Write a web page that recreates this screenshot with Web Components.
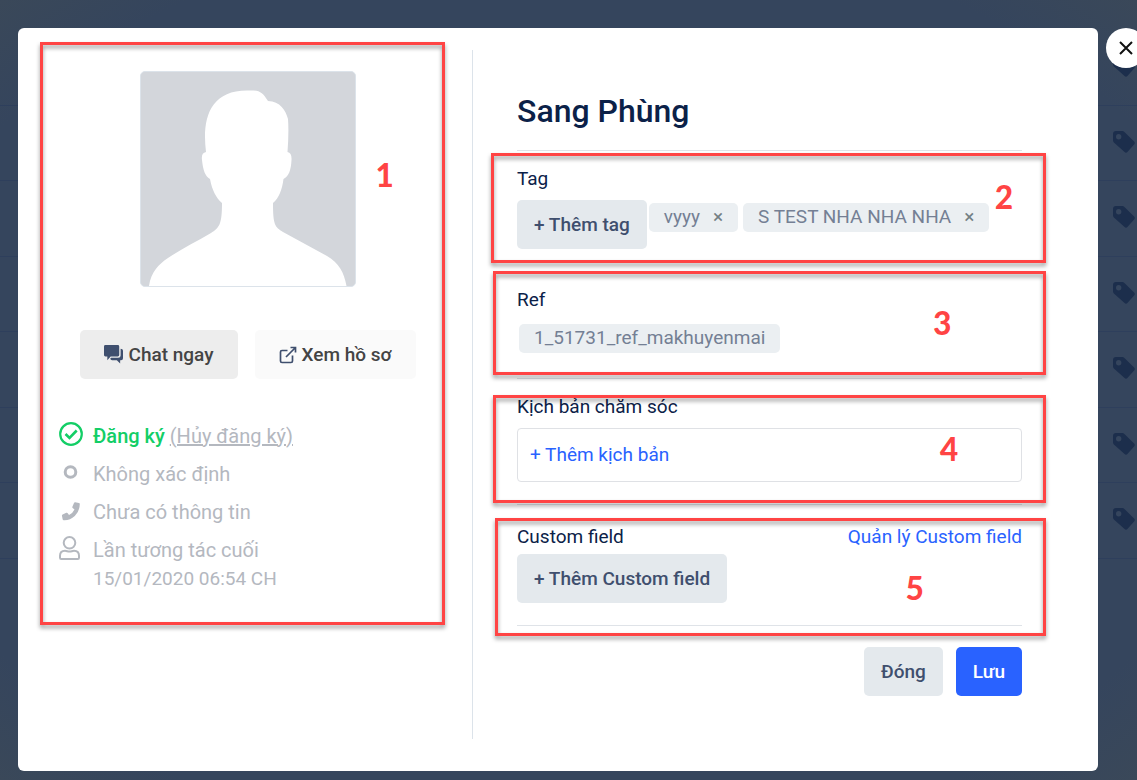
<!DOCTYPE html>
<html lang="vi">
<head>
<meta charset="utf-8">
<meta name="viewport" content="width=device-width, initial-scale=1">
<title>Sang Phùng</title>
<style>
    body {
        margin: 0;
        min-height: 100vh;
        background-color: #35455d;
        color: #0b2148;
        font-family: Roboto, "Noto Sans", sans-serif;
        font-size: 19px;
        line-height: 30px;
    }
</style>
</head>
<body>
<app-page></app-page>

<script>
// icon shapes, each on its own view box
const ICONS = {
    tag: ['0 0 22 22', '<path fill="currentColor" fill-rule="evenodd" d="M3 0h6.200q1.300 0 2.200.900l9.700 9.700q1.400 1.400 0 2.800l-6.700 7.700q-1.400 1.400-2.800 0L.900 11.400Q0 10.500 0 9.200V3Q0 0 3 0ZM5.700 3a2.700 2.700 0 1 0 0 5.400a2.700 2.700 0 0 0 0-5.400Z"/>'],
    close: ['0 0 14 14', '<path d="M1 1L13 13M13 1L1 13" fill="none" stroke="currentColor" stroke-width="2"/>'],
    chat: ['0 0 20 20', '<path fill="currentColor" d="M1.500 0h13Q16 0 16 1.500v9Q16 12 14.500 12H7l-3.500 4v-4H1.500Q0 12 0 10.500v-9Q0 0 1.500 0ZM17.500 4Q20 4 20 6v8Q20 16 18 16H17v3.500L13.500 16H8.500Q7 16 6.500 14.500l1-1H15Q17.500 13.500 17.500 11Z"/>'],
    open: ['0 0 18 18', '<g fill="none" stroke="currentColor" stroke-width="1.700"><path d="M8.500 4.500H3Q1.500 4.500 1.500 6v9Q1.500 16.500 3 16.500h9Q13.500 16.500 13.500 15V9.500"/><path d="M7 11L16 2M11.500 1.500h5V6.500"/></g>'],
    check: ['0 0 24 24', '<circle cx="12" cy="12" r="10.800" fill="none" stroke="currentColor" stroke-width="2.200"/><path d="M6.500 12l4 4L17.700 8.500" fill="none" stroke="currentColor" stroke-width="2.600"/>'],
    ring: ['0 0 24 24', '<circle cx="11.500" cy="12" r="5.300" fill="none" stroke="currentColor" stroke-width="3"/>'],
    phone: ['0 0 24 24', '<path fill="currentColor" transform="translate(-1 2)" d="M20.900 3.100l-3.700-.800q-.900-.100-1.200.700l-1.600 3.700q-.300.700.300 1.200l1.800 1.500q-1.700 3.700-5.500 5.500l-1.500-1.800q-.500-.600-1.200-.300l-3.700 1.600q-.800.400-.700 1.200l.800 3.900q.200.700 1 .700Q12 20.500 16.800 16Q21.600 11.500 21.800 4.100q0-.800-.9-1Z"/>'],
    user: ['0 0 24 24', '<g fill="none" stroke="currentColor" stroke-width="2"><circle cx="10.500" cy="6.800" r="5.800"/><path d="M1 21.800v-2q0-5 5-5c2 0 2.500.800 4.500.800s2.500-.8 4.500-.8q5 0 5 5v2q0 1.200-1.200 1.200H2.200Q1 23 1 21.800Z"/></g>'],
};

function define(name, render) {
    customElements.define(name, class extends HTMLElement {
        constructor() {
            super();
            this.attachShadow({ mode: 'open' });
        }
        connectedCallback() {
            this.shadowRoot.innerHTML = render(this);
        }
    });
}

define('ui-icon', (el) => {
    const [box, shape] = ICONS[el.getAttribute('name')];
    return `
        <style>
            :host { display: inline-block; flex: none; width: 24px; height: 24px; }
            svg { display: block; width: 100%; height: 100%; }
        </style>
        <svg viewBox="${box}" aria-hidden="true">${shape}</svg>`;
});

define('ui-button', (el) => `
    <style>
        :host { display: inline-block; }
        button {
            display: flex;
            align-items: center;
            justify-content: center;
            gap: 5px;
            width: 100%;
            height: 49px;
            padding: 0 17px;
            border: 0;
            border-radius: 5px;
            background-color: #e4e9ed;
            color: #3f4f6e;
            font: inherit;
            font-weight: 500;
            white-space: nowrap;
            cursor: pointer;
        }
        :host([kind="primary"]) button { background-color: #2962ff; color: white; }
        :host([kind="grey"]) button { padding: 0 24px; background-color: #ededed; color: #444; }
        :host([kind="light"]) button { padding: 0 24px; background-color: #fafafa; color: #444; }
        ::slotted(ui-icon) { color: #3f4f6e; }
        :host([kind="grey"]) ::slotted(ui-icon) { width: 19px; height: 19px; }
        :host([kind="light"]) ::slotted(ui-icon) { width: 18px; height: 18px; }
    </style>
    <button type="button"><slot></slot></button>`);

define('tag-badge', (el) => `
    <style>
        :host {
            display: inline-flex;
            align-items: center;
            gap: 13px;
            box-sizing: border-box;
            height: 29px;
            margin: 3px 3px 3px 2px;
            padding: 0 15px 2px;
            border-radius: 5px;
            background-color: #ebeff2;
            color: #747f94;
            line-height: 28px;
        }
        button {
            padding: 0;
            border: 0;
            background: none;
            color: #747f84;
            font: inherit;
            cursor: pointer;
        }
    </style>
    <slot></slot>${el.hasAttribute('removable') ? '<button type="button" aria-label="Xóa">×</button>' : ''}`);

// red marker frame laid over the block that holds it
define('note-box', (el) => `
    <style>
        :host {
            position: absolute;
            z-index: 1;
            border: 3px solid #ff4444;
            filter: drop-shadow(0 3px 2px rgba(0, 0, 0, .4));
            pointer-events: none;
        }
    </style>`);

define('note-number', (el) => `
    <style>
        :host {
            position: absolute;
            z-index: 2;
            color: #ff4444;
            font: bold 36px/32px Carlito, Lato, sans-serif;
            pointer-events: none;
        }
    </style>
    <slot></slot>`);

define('field-section', (el) => `
    <style>
        :host {
            display: block;
            position: relative;
            padding: 13px 0 22px;
            border-bottom: 1px solid #dfe3e8;
        }
        :host([compact]) { padding-top: 17px; }
        header {
            display: flex;
            justify-content: space-between;
            margin-bottom: 6px;
        }
        :host([compact]) header { margin-bottom: 2px; }
        h2 { margin: 0; font: inherit; }
        div { display: flex; flex-wrap: wrap; align-items: flex-start; }
    </style>
    <header><h2>${el.getAttribute('label')}</h2><slot name="action"></slot></header>
    <div><slot></slot></div>
    <slot name="note"></slot>`);

define('info-row', (el) => `
    <style>
        :host {
            display: flex;
            align-items: center;
            gap: 10px;
            min-height: 38px;
            padding-left: 19px;
            color: #b4b8bf;
            font-size: 20px;
            line-height: 29px;
        }
        ui-icon { margin-bottom: 4px; }
        :host([icon="check"]) ui-icon { color: #13ce66; }
    </style>
    <ui-icon name="${el.getAttribute('icon')}"></ui-icon>
    <span><slot></slot></span>`);

define('profile-avatar', () => `
    <style>
        :host { display: block; }
        svg {
            display: block;
            box-sizing: border-box;
            width: 216px;
            height: 216px;
            border: 1px solid #dce3ea;
            border-radius: 5px;
            background-color: #d3d6db;
        }
    </style>
    <svg viewBox="0 0 214 214" role="img" aria-label="Ảnh đại diện">
        <path fill="white" d="M8 214C10 200 18 192 27 186C40 177 55 170 70 161C78 156 81 153 81 131C75 126 71 118 69 107C64 104 62 98 61 88Q60 81 65 80C61 48 68 18 107 18.500C119 18 121 20 127 29C139 29 145 39 147 47Q148 60 146.500 80Q151 81 150.500 88C150 98 148 104 142.500 107C141 118 138 126 132 131C132 153 134 155 142 160L186 184C198 191 203 200 205.500 214Z"/>
    </svg>`);

define('profile-panel', () => `
    <style>
        :host {
            display: block;
            position: relative;
            padding: 21px 16px 0 22px;
            border-right: 1px solid #dce3ea;
        }
        profile-avatar { display: flex; justify-content: center; }
        .actions { display: flex; justify-content: center; gap: 17px; margin: 43px 0 38px; }
        .on { color: #13ce66; font-weight: 500; }
        a { color: inherit; }
        .date { padding-left: 53px; color: #b4b8bf; line-height: 20px; }
        note-box { inset: -8px 27px auto 22px; height: 577px; }
        note-number { top: 109px; left: 357px; }
    </style>
    <profile-avatar></profile-avatar>
    <div class="actions">
        <ui-button kind="grey"><ui-icon name="chat"></ui-icon>Chat ngay</ui-button>
        <ui-button kind="light"><ui-icon name="open"></ui-icon>Xem hồ sơ</ui-button>
    </div>
    <info-row icon="check"><span class="on">Đăng ký</span> <a href="#">(Hủy đăng ký)</a></info-row>
    <info-row icon="ring">Không xác định</info-row>
    <info-row icon="phone">Chưa có thông tin</info-row>
    <info-row icon="user">Lần tương tác cuối</info-row>
    <div class="date">15/01/2020 06:54 CH</div>
    <note-box></note-box>
    <note-number>1</note-number>`);

define('detail-panel', () => `
    <style>
        :host { display: block; padding: 41px 76px 43px 44px; }
        h1 {
            margin: 0;
            padding-bottom: 19px;
            border-bottom: 1px solid #dfe3e8;
            font-size: 32px;
            font-weight: 500;
            line-height: 40px;
        }
        a { color: #2962ff; text-decoration: none; }
        .script {
            flex: 1;
            box-sizing: border-box;
            height: 54px;
            padding: 0 12px;
            border: 1px solid #dfe1e5;
            border-radius: 4px;
            line-height: 52px;
        }
        footer { display: flex; justify-content: flex-end; gap: 13px; margin-top: 21px; }
        note-box { right: -24px; }
    </style>
    <h1>Sang Phùng</h1>
    <field-section label="Tag">
        <ui-button>+ Thêm tag</ui-button>
        <tag-badge removable>vyyy</tag-badge>
        <tag-badge removable>S TEST NHA NHA NHA</tag-badge>
        <note-box slot="note" style="left: -26px; top: 2px; bottom: 8px"></note-box>
        <note-number slot="note" style="right: 9px; top: 30px">2</note-number>
    </field-section>
    <field-section label="Ref">
        <tag-badge>1_51731_ref_makhuyenmai</tag-badge>
        <note-box slot="note" style="left: -24px; top: -1px; bottom: 3px"></note-box>
        <note-number slot="note" style="right: 71px; top: 35px">3</note-number>
    </field-section>
    <field-section label="Kịch bản chăm sóc">
        <div class="script"><a href="#">+ Thêm kịch bản</a></div>
        <note-box slot="note" style="left: -24px; top: 16px; bottom: 1px"></note-box>
        <note-number slot="note" style="right: 64px; top: 54px">4</note-number>
    </field-section>
    <field-section label="Custom field" compact>
        <a slot="action" href="#">Quản lý Custom field</a>
        <ui-button>+ Thêm Custom field</ui-button>
        <note-box slot="note" style="left: -22px; top: 13px; bottom: -11px"></note-box>
        <note-number slot="note" style="right: 98px; top: 67px">5</note-number>
    </field-section>
    <footer>
        <ui-button>Đóng</ui-button>
        <ui-button kind="primary">Lưu</ui-button>
    </footer>`);

define('profile-dialog', () => `
    <style>
        :host {
            display: grid;
            grid-template-columns: 455px 1fr;
            position: relative;
            margin: 28px 39px 9px 18px;
            padding: 22px 0 32px;
            border-radius: 6px;
            background-color: white;
        }
        .close {
            display: flex;
            align-items: center;
            justify-content: center;
            position: absolute;
            top: 0;
            right: -48px;
            width: 40px;
            height: 40px;
            padding: 0;
            border: 0;
            border-radius: 50%;
            background-color: white;
            color: #111;
            cursor: pointer;
        }
        .close ui-icon { width: 14px; height: 14px; }
    </style>
    <profile-panel></profile-panel>
    <detail-panel></detail-panel>
    <button class="close" type="button" aria-label="Đóng"><ui-icon name="close"></ui-icon></button>`);

// dimmed contact list behind the dialog
define('contact-rows', () => `
    <style>
        :host {
            display: grid;
            grid-auto-rows: 76px 75px;
            align-content: start;
            position: absolute;
            inset: 0;
            padding-top: 30px;
            background: radial-gradient(farthest-corner, #35455d 85%, #3a4859);
        }
        div {
            display: flex;
            align-items: center;
            justify-content: flex-end;
            padding: 0 2px 3px 0;
            border-bottom: 1px solid #2e3f5c;
        }
        ui-icon { width: 22px; height: 22px; color: #1c2e4c; }
    </style>
    ${'<div><ui-icon name="tag"></ui-icon></div>'.repeat(7)}`);

define('app-page', () => `
    <style>
        :host { display: flow-root; position: relative; min-height: 100vh; overflow: hidden; }
    </style>
    <contact-rows></contact-rows>
    <profile-dialog></profile-dialog>`);
</script>
</body>
</html>
